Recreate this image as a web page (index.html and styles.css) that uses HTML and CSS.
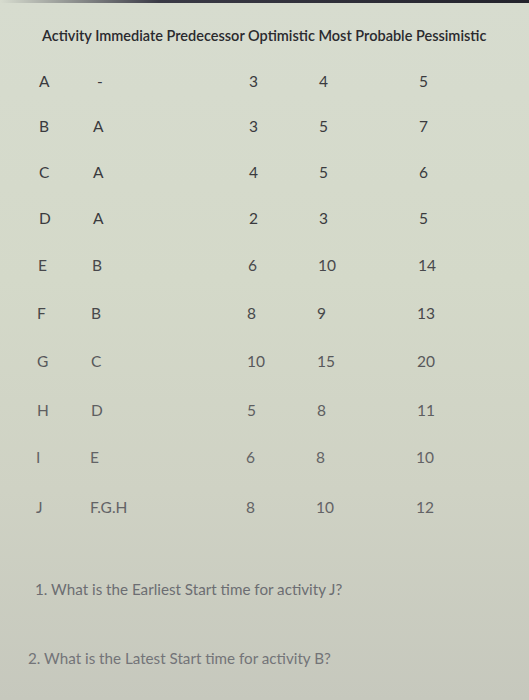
FILE: index.html
```html
<!DOCTYPE html>
<html lang="en">
<head>
<meta charset="utf-8">
<title>Activity table</title>
<link rel="stylesheet" href="styles.css">
</head>
<body>
<div class="topbar"></div>
<main class="sheet">
  <h1 class="header">Activity Immediate Predecessor Optimistic Most Probable Pessimistic</h1>
  <div class="table">
    <div class="row r1"><span>A</span><span class="pre">-</span><span>3</span><span>4</span><span>5</span></div>
    <div class="row r2"><span>B</span><span>A</span><span>3</span><span>5</span><span>7</span></div>
    <div class="row r3"><span>C</span><span>A</span><span>4</span><span>5</span><span>6</span></div>
    <div class="row r4"><span>D</span><span>A</span><span>2</span><span>3</span><span>5</span></div>
    <div class="row r5"><span>E</span><span>B</span><span>6</span><span>10</span><span>14</span></div>
    <div class="row r6"><span>F</span><span>B</span><span>8</span><span>9</span><span>13</span></div>
    <div class="row r7"><span>G</span><span>C</span><span>10</span><span>15</span><span>20</span></div>
    <div class="row r8"><span>H</span><span>D</span><span>5</span><span>8</span><span>11</span></div>
    <div class="row r9"><span>I</span><span>E</span><span>6</span><span>8</span><span>10</span></div>
    <div class="row r10"><span>J</span><span>F.G.H</span><span>8</span><span>10</span><span>12</span></div>
  </div>
  <p class="q q1">1. What is the Earliest Start time for activity J?</p>
  <p class="q q2">2. What is the Latest Start time for activity B?</p>
</main>
</body>
</html>
```
FILE: styles.css
```css
html, body {
  margin: 0;
  padding: 0;
}
body {
  width: 529px;
  height: 700px;
  overflow: hidden;
  font-family: Lato, "Open Sans", sans-serif;
  background: linear-gradient(180deg, #d7dccf 0%, #d4d9c9 40%, #cfd2c4 70%, #c6c8bd 100%);
  color: #333;
}
.topbar {
  height: 3px;
  background: linear-gradient(90deg, rgba(40,40,50,0) 0%, #3a3a46 30%, #23232c 100%);
}
.header {
  margin: 0;
  padding: 23px 0 0 42px;
  font-size: 14.5px;
  line-height: 20px;
  font-weight: 600;
  color: #2a2a2e;
  white-space: nowrap;
}
.table {
  margin-top: 25px;
  display: flex;
  flex-direction: column;
}
.row {
  display: grid;
  grid-template-columns: 54px 156px 70px 100px 1fr;
  padding-left: 39px;
  height: 47px;
  line-height: 20px;
  font-size: 15.5px;
  color: #3a3a3e;
}
.row.r1 { height: 45px; }
.row.r2, .row.r3 { height: 46px; }
.row.r4 { height: 47px; }
.row.r5, .row.r6 { height: 48px; color: #48484b; }
.row.r7 { height: 49px; color: #58585b; padding-left: 37px; }
.row.r8 { height: 47px; color: #5e5e61; padding-left: 37px; }
.row.r9 { height: 50px; color: #636366; padding-left: 36px; }
.row.r10 { height: 47px; color: #636366; padding-left: 36px; }
.row.r5 { padding-left: 38px; }
.row.r6 { padding-left: 37px; }
.pre { padding-left: 4px; }
.q {
  margin: 0;
  font-size: 15.2px;
  line-height: 20px;
  color: #6c6d72;
}
.q1 {
  margin-top: 35px;
  padding-left: 35px;
}
.q2 {
  margin-top: 49px;
  padding-left: 28px;
  color: #737478;
}
```
